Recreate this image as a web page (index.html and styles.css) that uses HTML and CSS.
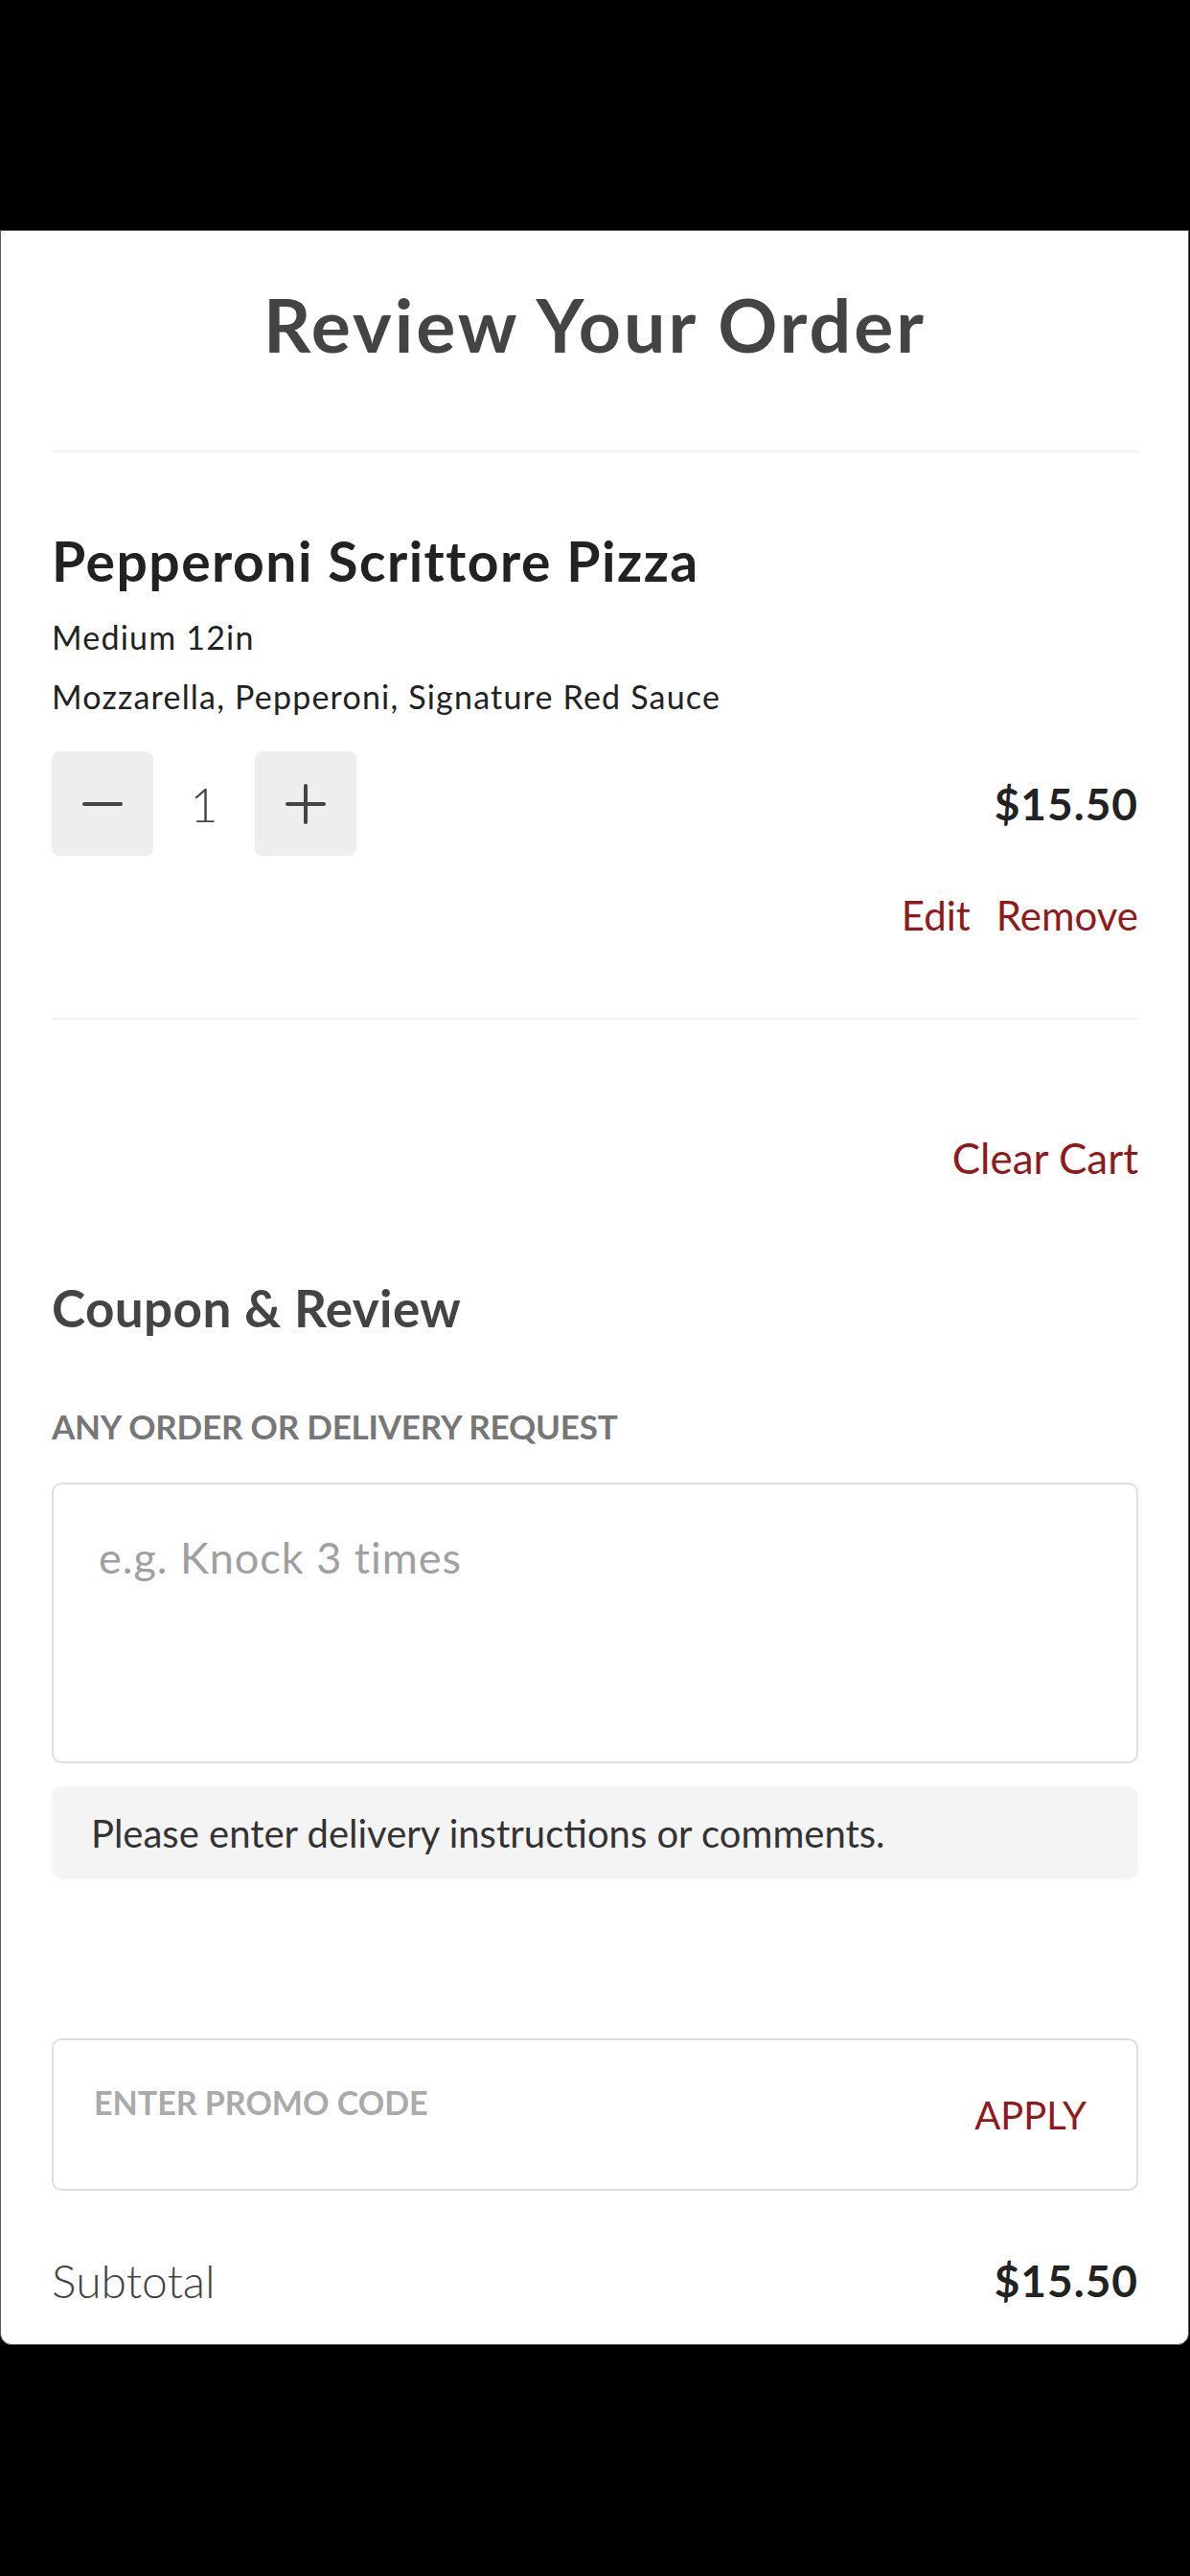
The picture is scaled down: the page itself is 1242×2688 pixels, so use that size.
FILE: index.html
```html
<!DOCTYPE html>
<html lang="en">
<head>
<meta charset="utf-8">
<title>Review Your Order</title>
<link rel="stylesheet" href="styles.css">
</head>
<body>
<div class="screen">
  <main class="card">
    <h1 class="title">Review Your Order</h1>
    <hr class="divider divider-top">
    <section class="item">
      <h2 class="item-name">Pepperoni Scrittore Pizza</h2>
      <p class="item-meta item-meta-first">Medium 12in</p>
      <p class="item-meta">Mozzarella, Pepperoni, Signature Red Sauce</p>
      <div class="qty-row">
        <div class="stepper">
          <button class="step" type="button" aria-label="Decrease">
            <svg width="42" height="42" viewBox="0 0 42 42"><line x1="2" y1="21" x2="40" y2="21" /></svg>
          </button>
          <span class="qty">1</span>
          <button class="step" type="button" aria-label="Increase">
            <svg width="42" height="42" viewBox="0 0 42 42"><line x1="2" y1="21" x2="40" y2="21" /><line x1="21" y1="2" x2="21" y2="40" /></svg>
          </button>
        </div>
        <span class="price">$15.50</span>
      </div>
      <div class="item-actions">
        <a class="link" href="#">Edit</a>
        <a class="link" href="#">Remove</a>
      </div>
    </section>
    <hr class="divider divider-bottom">
    <div class="clear-row"><a class="link link-clear" href="#">Clear Cart</a></div>
    <h3 class="section-title">Coupon &amp; Review</h3>
    <div class="field-label">ANY ORDER OR DELIVERY REQUEST</div>
    <div class="textarea"><span class="placeholder">e.g. Knock 3 times</span></div>
    <div class="hint">Please enter delivery instructions or comments.</div>
    <div class="promo">
      <span class="promo-placeholder">ENTER PROMO CODE</span>
      <span class="apply">APPLY</span>
    </div>
    <div class="subtotal-row">
      <span class="subtotal-label">Subtotal</span>
      <span class="price">$15.50</span>
    </div>
  </main>
</div>
</body>
</html>
```
FILE: styles.css
```css
* { box-sizing: border-box; }
html, body {
  margin: 0;
  padding: 0;
  background: #000;
}
body {
  width: 1242px;
  height: 2688px;
  overflow: hidden;
  font-family: Lato, "Noto Sans", "Liberation Sans", sans-serif;
}
.screen {
  padding-top: 240px;
}
.card {
  width: 1241px;
  background: #fff;
  border: 1px solid #5c5c5c;
  border-radius: 0 0 12px 12px;
  padding: 52px 52px 39px 53px;
  display: flex;
  flex-direction: column;
}
.title {
  margin: 0;
  font-size: 77px;
  line-height: 90px;
  font-weight: 700;
  letter-spacing: 3px;
  color: #444;
  text-align: center;
}
.divider {
  margin: 0;
  border: 0;
  height: 2px;
  background: #f1f1f1;
}
.divider-top { margin-top: 87px; }
.divider-bottom { margin-top: 82px; }
.item { display: flex; flex-direction: column; }
.item-name {
  margin: 79px 0 0;
  font-size: 57px;
  line-height: 68px;
  font-weight: 700;
  letter-spacing: 1.5px;
  color: #222;
}
.item-meta {
  margin: 0;
  font-size: 34px;
  line-height: 62px;
  font-weight: 400;
  letter-spacing: 1.2px;
  color: #222;
}
.item-meta-first { margin-top: 15px; }
.qty-row {
  margin-top: 26px;
  display: flex;
  align-items: center;
  justify-content: space-between;
}
.stepper {
  display: flex;
  align-items: center;
}
.step {
  width: 106px;
  height: 109px;
  border: 0;
  border-radius: 8px;
  background: #eeeeee;
  padding: 0;
  display: flex;
  align-items: center;
  justify-content: center;
}
.step svg { stroke: #444; stroke-width: 4; stroke-linecap: round; }
.qty {
  width: 106px;
  text-align: center;
  font-size: 50px;
  font-weight: 300;
  color: #444;
}
.price {
  font-size: 46px;
  font-weight: 700;
  letter-spacing: 1px;
  color: #222;
}
.item-actions {
  margin-top: 37px;
  display: flex;
  justify-content: flex-end;
  gap: 27px;
  line-height: 50px;
}
.link {
  color: #8f1a1d;
  font-size: 42px;
  font-weight: 400;
  text-decoration: none;
}
.link-clear { font-size: 44px; }
.clear-row {
  margin-top: 119px;
  display: flex;
  justify-content: flex-end;
  line-height: 50px;
}
.section-title {
  margin: 100px 0 0;
  font-size: 53px;
  line-height: 64px;
  font-weight: 700;
  letter-spacing: 0.4px;
  color: #444;
}
.field-label {
  margin-top: 70px;
  font-size: 35px;
  line-height: 42px;
  font-weight: 700;
  letter-spacing: -0.2px;
  color: #777;
}
.textarea {
  margin-top: 38px;
  height: 293px;
  border: 2px solid #dedede;
  border-radius: 10px;
  padding: 50px 47px;
}
.placeholder {
  display: block;
  font-size: 45px;
  line-height: 52px;
  letter-spacing: 1px;
  color: #a0a0a0;
}
.hint {
  margin-top: 24px;
  height: 97px;
  background: #f4f4f4;
  border-radius: 10px;
  padding: 0 41px;
  display: flex;
  align-items: center;
  font-size: 40px;
  color: #333;
}
.promo {
  margin-top: 166px;
  height: 159px;
  border: 2px solid #dedede;
  border-radius: 10px;
  padding: 0 52px 0 42px;
  display: flex;
  align-items: center;
  justify-content: space-between;
}
.promo-placeholder {
  margin-bottom: 26px;
  font-size: 34px;
  font-weight: 700;
  color: #aaa;
}
.apply {
  font-size: 40px;
  color: #8f1a1d;
}
.subtotal-row {
  margin-top: 65px;
  height: 56px;
  display: flex;
  align-items: center;
  justify-content: space-between;
}
.subtotal-label {
  font-size: 48px;
  font-weight: 300;
  color: #444;
}
```
